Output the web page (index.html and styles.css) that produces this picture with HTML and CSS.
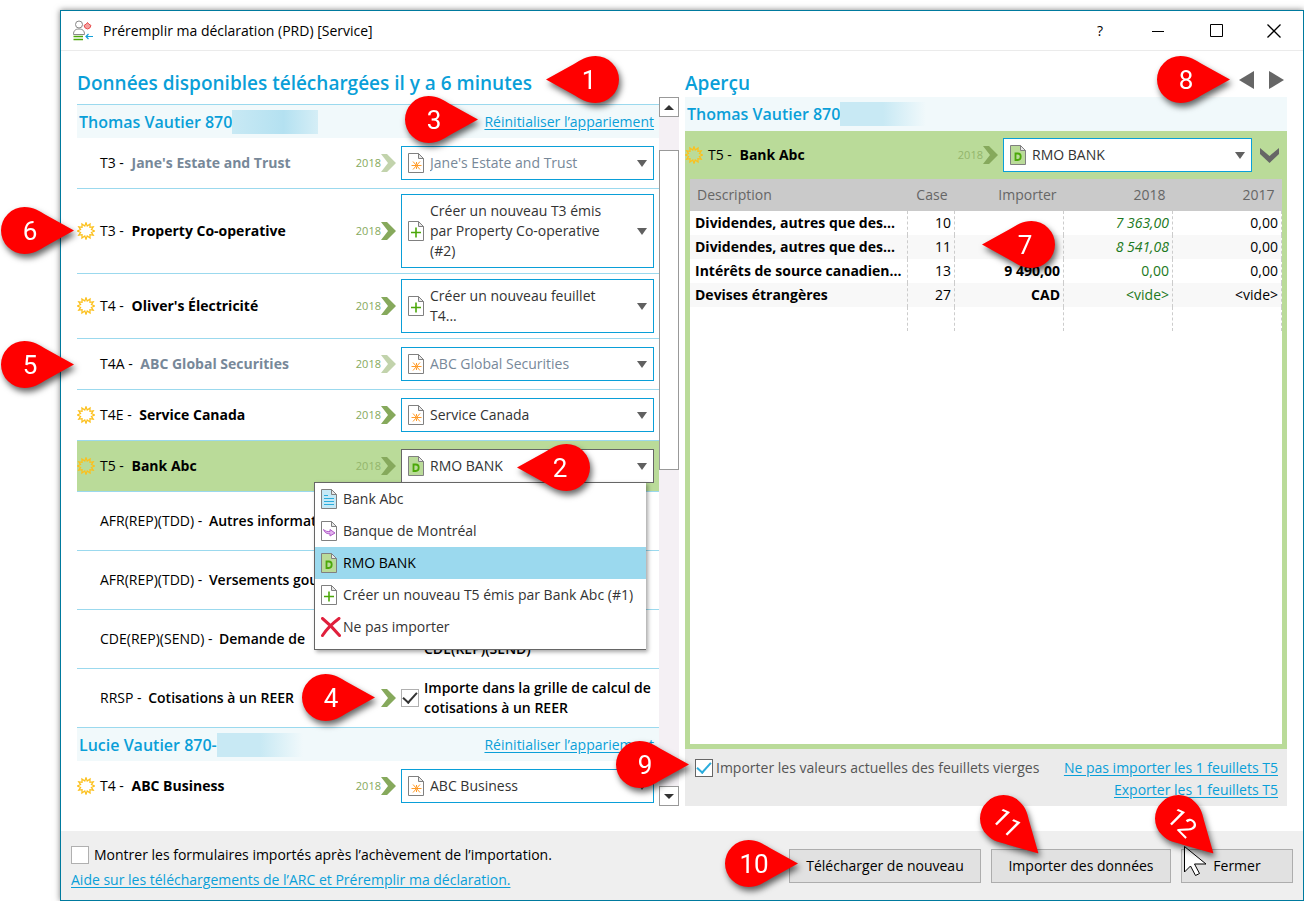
FILE: index.html
```html
<!DOCTYPE html>
<html lang="fr">
<head>
<meta charset="utf-8">
<title>Préremplir ma déclaration (PRD) [Service]</title>
<link rel="stylesheet" href="styles.css">
</head>
<body>
<svg class="defs" aria-hidden="true">
  <symbol id="sun" viewBox="0 0 18 18"><path d="M9 .8l1.200 3.200 2.900-2-.2 3.300 3.400-.5-1.900 2.800 3.200 1.400-3.200 1.400 1.900 2.800-3.400-.5.2 3.300-2.900-2L9 17.200 7.800 14l-2.900 2 .2-3.300-3.400.5 1.900-2.800L.4 9l3.200-1.400-1.900-2.800 3.400.5L4.900 2l2.900 2z" fill="none" stroke="#fcc01c" stroke-width="1.200"/></symbol>
  <symbol id="chev" viewBox="0 0 15 18"><path d="M0 0h6l9 9-9 9H0l7-9z" fill="currentColor"/></symbol>
  <symbol id="page" viewBox="0 0 16 20"><path d="M.5.5h10l5 5v14H.5z" stroke="#808080"/><path d="M10.500.5v5h5z" fill="#e8e8e8" stroke="#808080"/></symbol>
  <symbol id="star" viewBox="0 0 16 20"><g fill="#fff"><use href="#page"/></g><path d="M8.500 9v2.500M8.500 13.500V16M3.500 12.500h10M5 8.500l7 8M12 8.500l-7 8" stroke="#ff9a26"/></symbol>
  <symbol id="plus" viewBox="0 0 16 20"><g fill="#fff"><use href="#page"/></g><path d="M8 6.500v10M3 11.500h10" stroke="#4ca80a" stroke-width="1.600"/></symbol>
  <symbol id="dpage" viewBox="0 0 16 20"><g fill="#badb99"><use href="#page"/></g><path d="M5.500 8.500h2.300c2 0 2.900 1.300 2.900 3s-.9 3.500-2.900 3.500H5.500z" fill="none" stroke="#4ca80a" stroke-width="1.800"/></symbol>
  <symbol id="lines" viewBox="0 0 16 20"><g fill="#c5e9f6"><use href="#page"/></g><path d="M3 6.500h4M3 9.500h10M3 12.500h10M3 15.500h10" stroke="#2bacdc"/></symbol>
  <symbol id="arrow" viewBox="0 0 16 20"><g fill="#fff"><use href="#page"/></g><path d="M2.500 8.500c2 2 4 2.200 6.500 2V8.500l5 3.500-5 3v-2.200c-3 0-5.300-.8-6.500-4.300z" fill="#e3b4ee" stroke="#b05cc8"/></symbol>
  <symbol id="cross" viewBox="0 0 20 20"><path d="M1.500 1.500c5 4 12 11 17 17M18 1.500C12 6 5 13 1.500 18.500" fill="none" stroke="#e0203c" stroke-width="3" stroke-linecap="round"/></symbol>
  <symbol id="pin" viewBox="0 0 73 47"><path d="M73 23.500L45 8C38 4 33 0 23.500 0a23.500 23.500 0 0 0 0 47C33 47 38 43 45 39z" fill="#f00"/></symbol>
</svg>

<div class="window">
  <header class="titlebar">
    <svg class="app-icon" viewBox="0 0 20 21" fill="none"><circle cx="6" cy="4.500" r="3.500" stroke="#888"/><path d="M.5 14.500c0-4 2-5.500 5.500-5.500s5.500 1.500 5.500 5.500z" stroke="#888"/><path d="M.5 16.500h9.500M.5 19.500h9.500" stroke="#4ca80a" stroke-width="1.300"/><path d="M14.500 2.500l1.200 1.500 2.300 1.500-1.200 2.500-2.300 1-2.300-1L11 5.500 13.300 4z" fill="#f5a0a0" stroke="#e84c4c"/><path d="M20 16.500h-7M15.500 14l-2.500 2.500 2.500 2.500" stroke="#14a0d8" stroke-width="1.200"/></svg>
    <h1>Préremplir ma déclaration (PRD) [Service]</h1>
    <button class="win-btn" aria-label="Aide">?</button>
    <button class="win-btn" aria-label="Réduire"><svg width="12" height="14" fill="none" stroke="#000"><path d="M0 7.500h12"/></svg></button>
    <button class="win-btn" aria-label="Agrandir"><svg width="13" height="14" fill="none" stroke="#000"><path d="M.5.500h12v12H.5z"/></svg></button>
    <button class="win-btn" aria-label="Quitter"><svg width="14" height="14" fill="none" stroke="#000" stroke-width="1.300"><path d="M.5.500l13 13M13.500.500l-13 13"/></svg></button>
  </header>

  <main class="columns">
    <section class="pane">
      <h2>Données disponibles téléchargées il y a 6 minutes</h2>
      <div class="scroller">
        <div class="list">
          <div class="person"><h3>Thomas Vautier 870</h3><span class="mask"></span><a href="#">Réinitialiser l’appariement</a></div>

          <div class="row faded">
            <span class="flag"></span><div class="name">T3 - <b>Jane's Estate and Trust</b></div><span class="year">2018</span><svg class="chev"><use href="#chev"/></svg>
            <div class="combo"><svg class="doc"><use href="#star"/></svg><select aria-label="T3 Jane's Estate and Trust"><option>Jane's Estate and Trust</option></select></div>
          </div>
          <div class="row">
            <svg class="flag"><use href="#sun"/></svg><div class="name">T3 - <b>Property Co-operative</b></div><span class="year">2018</span><svg class="chev"><use href="#chev"/></svg>
            <div class="combo"><svg class="doc"><use href="#plus"/></svg><button class="pick" aria-haspopup="listbox">Créer un nouveau T3 émis par Property Co-operative (#2)</button></div>
          </div>
          <div class="row">
            <svg class="flag"><use href="#sun"/></svg><div class="name">T4 - <b>Oliver's Électricité</b></div><span class="year">2018</span><svg class="chev"><use href="#chev"/></svg>
            <div class="combo"><svg class="doc"><use href="#plus"/></svg><button class="pick" aria-haspopup="listbox">Créer un nouveau feuillet T4...</button></div>
          </div>
          <div class="row faded">
            <span class="flag"></span><div class="name">T4A - <b>ABC Global Securities</b></div><span class="year">2018</span><svg class="chev"><use href="#chev"/></svg>
            <div class="combo"><svg class="doc"><use href="#star"/></svg><select aria-label="T4A ABC Global Securities"><option>ABC Global Securities</option></select></div>
          </div>
          <div class="row">
            <svg class="flag"><use href="#sun"/></svg><div class="name">T4E - <b>Service Canada</b></div><span class="year">2018</span><svg class="chev"><use href="#chev"/></svg>
            <div class="combo"><svg class="doc"><use href="#star"/></svg><select aria-label="T4E Service Canada"><option>Service Canada</option></select></div>
          </div>
          <div class="row active">
            <svg class="flag"><use href="#sun"/></svg><div class="name">T5 - <b>Bank Abc</b></div><span class="year">2018</span><svg class="chev"><use href="#chev"/></svg>
            <div class="combo open"><svg class="doc"><use href="#dpage"/></svg><select aria-label="T5 Bank Abc"><option>RMO BANK</option></select>
              <ul class="menu" role="listbox">
                <li role="option"><svg class="doc"><use href="#lines"/></svg>Bank Abc</li>
                <li role="option"><svg class="doc"><use href="#arrow"/></svg>Banque de Montréal</li>
                <li role="option" class="selected" aria-selected="true"><svg class="doc"><use href="#dpage"/></svg>RMO BANK</li>
                <li role="option"><svg class="doc"><use href="#plus"/></svg>Créer un nouveau T5 émis par Bank Abc (#1)</li>
                <li role="option"><svg class="doc wide"><use href="#cross"/></svg>Ne pas importer</li>
              </ul>
            </div>
          </div>
          <div class="row tall"><span class="flag"></span><div class="name">AFR(REP)(TDD) - <em>Autres informations</em></div></div>
          <div class="row tall"><span class="flag"></span><div class="name">AFR(REP)(TDD) - <em>Versements gouv.</em></div></div>
          <div class="row tall"><span class="flag"></span><div class="name">CDE(REP)(SEND) - <em>Demande de</em></div><div class="note">CDE(REP)(SEND)</div></div>
          <div class="row tall"><span class="flag"></span><div class="name">RRSP - <em>Cotisations à un REER</em></div><svg class="chev"><use href="#chev"/></svg>
            <label class="check"><input type="checkbox" class="box dark" checked><span>Importe dans la grille de calcul de cotisations à un REER</span></label></div>

          <div class="person"><h3>Lucie Vautier 870-</h3><span class="mask fade"></span><a href="#">Réinitialiser l’appariement</a></div>
          <div class="row last">
            <svg class="flag"><use href="#sun"/></svg><div class="name">T4 - <b>ABC Business</b></div><span class="year">2018</span><svg class="chev"><use href="#chev"/></svg>
            <div class="combo"><svg class="doc"><use href="#star"/></svg><select aria-label="T4 ABC Business"><option>ABC Business</option></select></div>
          </div>
        </div>
        <div class="scrollbar">
          <button aria-label="Monter"><svg width="10" height="5"><path d="M0 5l5-5 5 5z" fill="#333"/></svg></button>
          <div class="track"><div class="thumb"></div></div>
          <button aria-label="Descendre"><svg width="10" height="5"><path d="M0 0l5 5 5-5z" fill="#333"/></svg></button>
        </div>
      </div>
    </section>

    <section class="pane">
      <div class="head"><h2>Aperçu</h2>
        <button class="nav" aria-label="Précédent"><svg width="15" height="18"><path d="M15 0v18L0 9z" fill="#666"/></svg></button>
        <button class="nav" aria-label="Suivant"><svg width="15" height="18"><path d="M0 0v18l15-9z" fill="#666"/></svg></button>
      </div>
      <div class="person"><h3>Thomas Vautier 870</h3><span class="mask fade"></span></div>
      <div class="preview">
        <div class="slip">
          <svg class="flag"><use href="#sun"/></svg><div class="name">T5 - <b>Bank Abc</b></div><span class="year">2018</span><svg class="chev"><use href="#chev"/></svg>
          <div class="combo"><svg class="doc"><use href="#dpage"/></svg><select aria-label="Feuillet T5"><option>RMO BANK</option></select></div>
          <button class="fold" aria-label="Afficher plus"><svg width="19" height="15"><path d="M0 0l9.500 8L19 0v6l-9.500 9L0 6z" fill="#666"/></svg></button>
        </div>
        <div class="sheet">
          <table>
            <colgroup><col><col class="c-case"><col class="c-num"><col class="c-num"><col class="c-num"></colgroup>
            <thead><tr><th>Description</th><th>Case</th><th>Importer</th><th>2018</th><th>2017</th></tr></thead>
            <tbody>
              <tr><td>Dividendes, autres que des...</td><td>10</td><td></td><td class="calc">7 363,00</td><td>0,00</td></tr>
              <tr><td>Dividendes, autres que des...</td><td>11</td><td></td><td class="calc">8 541,08</td><td>0,00</td></tr>
              <tr><td>Intérêts de source canadien...</td><td>13</td><td>9 490,00</td><td>0,00</td><td>0,00</td></tr>
              <tr><td>Devises étrangères</td><td>27</td><td>CAD</td><td>&lt;vide&gt;</td><td>&lt;vide&gt;</td></tr>
              <tr><td></td><td></td><td></td><td></td><td></td></tr>
            </tbody>
          </table>
        </div>
      </div>
      <div class="options">
        <label><input type="checkbox" class="box blue" checked>Importer les valeurs actuelles des feuillets vierges</label>
        <div class="links"><a href="#">Ne pas importer les 1 feuillets T5</a><a href="#">Exporter les 1 feuillets T5</a></div>
      </div>
    </section>
  </main>

  <footer class="actions">
    <div class="help">
      <label><input type="checkbox" class="box">Montrer les formulaires importés après l’achèvement de l’importation.</label>
      <a href="#">Aide sur les téléchargements de l’ARC et Préremplir ma déclaration.</a>
    </div>
    <button class="btn download">Télécharger de nouveau</button>
    <button class="btn import">Importer des données</button>
    <button class="btn close">Fermer</button>
  </footer>
</div>

<svg class="cursor" viewBox="0 0 24 32"><path d="M.5.500v25.500l6-6 5 9.500 4-2-5-9.500H22z" fill="#fff" stroke="#000"/></svg>

<svg class="pin left p1"><use href="#pin" width="73" height="47" transform="matrix(-1 0 0 1 73 0)"/><text x="43" y="33">1</text></svg>
<svg class="pin left p2"><use href="#pin" width="73" height="47" transform="matrix(-1 0 0 1 73 0)"/><text x="43" y="33">2</text></svg>
<svg class="pin p3"><use href="#pin" width="73" height="47"/><text x="29" y="33">3</text></svg>
<svg class="pin p4"><use href="#pin" width="73" height="47"/><text x="29" y="33">4</text></svg>
<svg class="pin p5"><use href="#pin" width="73" height="47"/><text x="29" y="33">5</text></svg>
<svg class="pin p6"><use href="#pin" width="73" height="47"/><text x="29" y="33">6</text></svg>
<svg class="pin p7"><use href="#pin" width="73" height="47" transform="matrix(-1 0 0 1 73 0)"/><text x="43" y="33">7</text></svg>
<svg class="pin p8"><use href="#pin" width="73" height="47"/><text x="29" y="33">8</text></svg>
<svg class="pin p9"><use href="#pin" width="73" height="47"/><text x="29" y="33">9</text></svg>
<svg class="pin p10"><use href="#pin" width="73" height="47"/><text x="29" y="33">10</text></svg>
<svg class="pin p11"><g transform="rotate(45 23.500 23.500)"><use href="#pin" width="73" height="47"/><text x="29" y="33">11</text></g></svg>
<svg class="pin p12"><g transform="rotate(45 23.500 23.500)"><use href="#pin" width="73" height="47"/><text x="29" y="33">12</text></g></svg>
</body>
</html>
```

FILE: styles.css
```css
* { box-sizing: border-box; }
body {
  position: relative;
  display: flex;
  min-height: 100vh;
  margin: 0;
  padding: 10px 0 0 60px;
  background: #fff;
  color: #000;
  font: 14px/20px "Open Sans", "Noto Sans", sans-serif;
}
button, select, input { font: inherit; color: inherit; margin: 0; }
button { border: 0; padding: 0; background: none; }
h1, h2, h3, ul { margin: 0; padding: 0; }
a { color: #0a9fd8; text-decoration: underline; text-underline-offset: 2px; }
svg { flex: none; }
.defs { position: absolute; width: 0; height: 0; }

.window {
  flex: 1;
  display: flex;
  flex-direction: column;
  min-width: 0;
  border: 1px solid #007a9e;
  box-shadow: 0 0 6px rgba(0, 0, 0, .5);
}
.titlebar {
  display: flex;
  align-items: center;
  height: 40px;
  padding-left: 12px;
  border-bottom: 1px solid #ebebeb;
}
.app-icon { width: 20px; height: 21px; }
.titlebar h1 { flex: 1; padding-left: 10px; font-size: 14px; font-weight: 400; }
.win-btn { display: grid; place-items: center; width: 58px; height: 38px; }

.columns {
  flex: 1;
  display: grid;
  grid-template-columns: 1fr 1fr;
  gap: 6px;
  padding: 0 16px 25px;
}
.pane { display: flex; flex-direction: column; min-width: 0; }
h2 { flex: 1; color: #0a9fd8; font-size: 19px; line-height: 26px; font-weight: 600; }
.pane > h2, .head { flex: none; height: 46px; padding-top: 19px; }
.head { display: flex; gap: 15px; padding-right: 3px; }
.nav { display: flex; height: 20px; align-items: center; }

.scroller { flex: 1; display: flex; }
.list { flex: 1; min-width: 0; padding-top: 7px; }
.person {
  display: flex;
  align-items: center;
  height: 34px;
  padding: 0 5px 0 2px;
  background: #f1f9fb;
}
.list .person { border-top: 1px solid #9bd9ee; }
.person h3 { color: #0a9fd8; font-size: 16px; font-weight: 600; }
.mask { width: 86px; height: 24px; background: linear-gradient(90deg, #c8e9f4, #b4e1f1 60%, #d5eef6); }
.mask.fade { background: linear-gradient(90deg, #c8e9f4 50%, #f1f9fb); }
.person a { margin-left: auto; }

.row {
  display: flex;
  align-items: center;
  min-height: 51px;
  padding: 5px 5px 5px 0;
  border-bottom: 1px solid #9bd9ee;
}
.row.tall { min-height: 59px; }
.row.tall:has(+ .person) { min-height: 58px; border-bottom: 0; }
.row.last { min-height: 45px; padding: 8px 5px 3px 0; border-bottom: 0; }
.flag { flex: none; width: 18px; height: 18px; }
.name { flex: 1; min-width: 0; padding-left: 5px; white-space: nowrap; }
.name b { margin-left: 4px; font-weight: 700; }
.name em { margin-left: 3px; font-style: normal; font-weight: 600; }
.tall .name { font-weight: 500; }
.year { color: #86a95c; font-size: 11px; }
.chev { width: 15px; height: 18px; margin-right: 5px; color: #86a95c; }
.faded .chev { opacity: .5; }
.faded b, .faded .combo { color: #778899; }
.active, .preview { background: #badb99; }
.active .year, .slip .year { color: #93b56b; }

.combo {
  position: relative;
  flex: none;
  display: flex;
  align-items: center;
  width: 253px;
  min-height: 34px;
  padding: 6px;
  border: 1px solid #0a9fd8;
  background: #fff;
  color: #333;
}
.combo::after {
  content: "";
  border: 5px solid transparent;
  border-top: 7px solid #606060;
  border-bottom: 0;
  pointer-events: none;
}
.combo.open { border-color: #666; }
.doc { width: 16px; height: 20px; margin-right: 6px; }
.combo select, .pick { flex: 1; min-width: 0; text-align: left; }
.combo select { appearance: none; border: 0; padding: 0; background: none; line-height: 20px; opacity: 1; }
.pick { padding-right: 30px; }

.menu {
  position: absolute;
  z-index: 1;
  top: 32px;
  right: 7px;
  width: 332px;
  border: solid #666;
  border-width: 1px 0 1px 1px;
  background: #fff;
  box-shadow: 2px 2px 4px rgba(0, 0, 0, .35);
  list-style: none;
}
.menu li { display: flex; align-items: center; height: 32px; padding-left: 6px; white-space: nowrap; }
.menu li:last-child { height: 38px; padding-bottom: 6px; }
.menu .selected { background: #9bd9ee; color: #000; }
.menu .wide { width: 20px; margin-right: 2px; }

.note, .check { flex: none; width: 253px; font-weight: 600; }
.note { padding: 20px 0 0 23px; }
.check { display: flex; align-items: center; gap: 5px; margin-right: -4px; }
.check { width: 257px; }
.box {
  appearance: none;
  flex: none;
  display: grid;
  place-items: center;
  width: 18px;
  height: 18px;
  border: 1px solid #b0b0b0;
  background: #fff;
}
.box:checked::before {
  content: "";
  width: 12px;
  height: 6px;
  border: solid #333;
  border-width: 0 0 2px 2px;
  transform: translateY(-2px) rotate(-48deg);
}
.box.blue { border-color: #666; }
.box.blue:checked::before { border-color: #2bacdc; }

.scrollbar { flex: none; display: flex; flex-direction: column; width: 20px; background: #f4f0f4; }
.scrollbar button { display: grid; place-items: center; height: 20px; border: 1px solid #999; background: #fff; }
.track { flex: 1; padding-top: 33px; }
.thumb { height: 320px; border: 1px solid #999; background: #fff; }

.preview { flex: 1; display: flex; flex-direction: column; padding: 0 5px 5px; }
.slip { display: flex; align-items: center; height: 48px; margin: 0 -5px; }
.slip .combo { width: 249px; }
.fold { display: flex; padding: 0 8px; }
.sheet { flex: 1; background: #fff; }
table { width: 100%; border-collapse: collapse; table-layout: fixed; }
.c-case { width: 47px; }
.c-num { width: 109px; }
th, td { height: 24px; padding: 0 3px; border-right: 1px dashed #ccc; text-align: right; white-space: nowrap; }
th { height: 32px; padding: 0 7px; border: 0; background: #cacaca; color: #666; font-weight: 400; }
th:first-child { text-align: left; }
td:first-child { padding: 0 0 0 5px; text-align: left; font-weight: 700; }
td:nth-child(3) { font-weight: 700; }
td:nth-child(4) { color: #217821; }
.calc { font-style: italic; }
tbody tr:nth-child(even) { background: #f8f8f8; }

.options { display: flex; justify-content: space-between; height: 57px; padding: 8px 9px 0 10px; background: #ebebeb; color: #555; }
.options label, .help label { display: flex; align-items: center; }
.options label { gap: 3px; height: 22px; }
.links { display: flex; flex-direction: column; align-items: flex-end; line-height: 22px; }

.actions { display: flex; gap: 10px; height: 69px; padding: 14px 10px 0; background: #efefef; }
.help { flex: 1; display: flex; flex-direction: column; gap: 5px; }
.help label { gap: 5px; }
.btn { height: 34px; margin-top: 4px; border: 1px solid #adadad; background: #e1e1e1; }
.download { width: 192px; }
.import { width: 180px; }
.close { width: 112px; }

.cursor { position: absolute; left: 1184px; top: 846px; width: 24px; height: 32px; }
.pin {
  position: absolute;
  z-index: 2;
  width: 73px;
  height: 47px;
  overflow: visible;
  filter: drop-shadow(2px 4px 3px rgba(0, 0, 0, .6));
}
.pin text { fill: #fff; font: 26px Roboto, sans-serif; text-anchor: middle; }
.p1 { left: 546px; top: 56px; }
.p2 { left: 517px; top: 444px; }
.p3 { left: 405px; top: 96px; }
.p4 { left: 302px; top: 674px; }
.p5 { left: 1px; top: 341px; }
.p6 { left: 1px; top: 207px; }
.p7 { left: 982px; top: 221px; }
.p8 { left: 1157px; top: 56px; }
.p9 { left: 616px; top: 741px; }
.p10 { left: 725px; top: 840px; }
.p11 { left: 980px; top: 795px; }
.p12 { left: 1155px; top: 795px; }
```
